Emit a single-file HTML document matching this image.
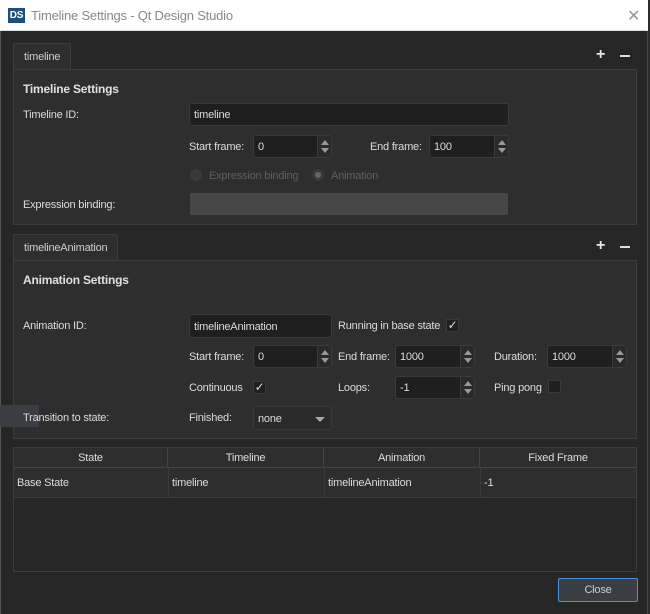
<!DOCTYPE html>
<html><head><meta charset="utf-8"><style>
*{box-sizing:border-box;margin:0;padding:0}
body{width:650px;height:614px;background:#2b2b2b;font-family:"Liberation Sans",sans-serif;font-size:11px;letter-spacing:-0.2px;color:#dcdcdc;position:relative;overflow:hidden}
.a{position:absolute}
.win{left:0;top:0;width:648px;height:614px;background:#262626;border-left:1px solid #555;border-right:1px solid #444}
.title{left:0;top:0;width:648px;height:31px;background:#fff;border-bottom:1px solid #ddd}
.logo{left:8px;top:8px;width:17px;height:15px;background:#1e4f7a;color:#fff;font-weight:bold;font-size:10px;line-height:15px;text-align:center}
.ttl{left:31px;top:8px;font-size:13px;color:#888}
.tab{background:#2e2e2e;border:1px solid #3c3c3c;border-bottom:none;border-radius:2px 2px 0 0;color:#cfcfcf;padding:0 10px;line-height:26px}
.panel{background:#2e2e2e;border:1px solid #3c3c3c}
.h{font-weight:bold;font-size:12px;color:#e0e0e0}
.inp{background:#1f1f1f;border:1px solid #3a3a3a;border-radius:3px;color:#dcdcdc;padding-left:4px}
.sp{position:absolute;right:0;top:0;width:14px;height:100%;border-left:1px solid #3a3a3a;background:#2a2a2a}
.sp:before{content:"";position:absolute;left:3px;top:4px;border:4px solid transparent;border-bottom:5px solid #999;border-top:0}
.sp:after{content:"";position:absolute;left:3px;bottom:4px;border:4px solid transparent;border-top:5px solid #999;border-bottom:0}
.cb{width:13px;height:13px;background:#1f1f1f;border:1px solid #3a3a3a;color:#ddd;font-size:12px;line-height:11px;text-align:center}
.pm{color:#e6e6e6;font-size:16px;font-weight:bold}
.th{background:#2e2e2e;border-right:1px solid #444;border-bottom:1px solid #444;text-align:center;line-height:21px;color:#ddd}
</style></head><body>
<div class="a win"></div>
<div class="a title"></div>
<div class="a logo">DS</div>
<div class="a ttl">Timeline Settings - Qt Design Studio</div>
<div class="a" style="left:627px;top:6px;font-size:16px;color:#999">✕</div>

<div class="a tab" style="left:13px;top:43px;height:27px">timeline</div>
<div class="a pm" style="left:596px;top:46px">+</div><div class="a" style="left:620px;top:55px;width:10px;height:2px;background:#ddd"></div>
<div class="a panel" style="left:13px;top:69px;width:624px;height:156px"></div>
<div class="a h" style="left:23px;top:82px">Timeline Settings</div>
<div class="a" style="left:23px;top:109px">Timeline ID:</div>
<div class="a inp" style="left:189px;top:103px;width:320px;height:23px;line-height:23px">timeline</div>
<div class="a" style="left:189px;top:141px">Start frame:</div>
<div class="a inp" style="left:253px;top:135px;width:79px;height:23px;line-height:23px">0<span class="sp"></span></div>
<div class="a" style="left:370px;top:141px">End frame:</div>
<div class="a inp" style="left:429px;top:135px;width:80px;height:23px;line-height:23px">100<span class="sp"></span></div>
<div class="a" style="left:190px;top:169px;width:12px;height:12px;border-radius:50%;background:#3a3a3a"></div>
<div class="a" style="left:209px;top:170px;color:#5f5f5f">Expression binding</div>
<div class="a" style="left:312px;top:169px;width:12px;height:12px;border-radius:50%;background:#3a3a3a"><div class="a" style="left:3px;top:3px;width:6px;height:6px;border-radius:50%;background:#666"></div></div>
<div class="a" style="left:331px;top:170px;color:#5f5f5f">Animation</div>
<div class="a" style="left:23px;top:199px">Expression binding:</div>
<div class="a" style="left:190px;top:193px;width:318px;height:22px;background:#474747;border-radius:2px"></div>

<div class="a tab" style="left:13px;top:234px;height:27px">timelineAnimation</div>
<div class="a pm" style="left:596px;top:237px">+</div><div class="a" style="left:620px;top:246px;width:10px;height:2px;background:#ddd"></div>
<div class="a panel" style="left:13px;top:260px;width:624px;height:179px"></div>
<div class="a h" style="left:23px;top:273px">Animation Settings</div>
<div class="a" style="left:23px;top:320px">Animation ID:</div>
<div class="a inp" style="left:189px;top:314px;width:143px;height:24px;line-height:24px">timelineAnimation</div>
<div class="a" style="left:338px;top:320px">Running in base state</div>
<div class="a cb" style="left:446px;top:319px">✓</div>
<div class="a" style="left:189px;top:351px">Start frame:</div>
<div class="a inp" style="left:253px;top:345px;width:79px;height:23px;line-height:23px">0<span class="sp"></span></div>
<div class="a" style="left:338px;top:351px">End frame:</div>
<div class="a inp" style="left:395px;top:345px;width:80px;height:23px;line-height:23px">1000<span class="sp"></span></div>
<div class="a" style="left:494px;top:351px">Duration:</div>
<div class="a inp" style="left:547px;top:345px;width:80px;height:23px;line-height:23px">1000<span class="sp"></span></div>
<div class="a" style="left:189px;top:382px">Continuous</div>
<div class="a cb" style="left:253px;top:381px">✓</div>
<div class="a" style="left:338px;top:382px">Loops:</div>
<div class="a inp" style="left:395px;top:376px;width:80px;height:23px;line-height:23px">-1<span class="sp"></span></div>
<div class="a" style="left:494px;top:382px">Ping pong</div>
<div class="a cb" style="left:548px;top:380px"></div>
<div class="a" style="left:0;top:405px;width:39px;height:22px;background:#3a3d42"></div>
<div class="a" style="left:23px;top:412px">Transition to state:</div>
<div class="a" style="left:189px;top:412px">Finished:</div>
<div class="a inp" style="left:253px;top:406px;width:79px;height:24px;line-height:24px;background:#2a2a2a">none<span class="a" style="right:6px;top:10px;border:5px solid transparent;border-top:5px solid #aaa;border-bottom:0"></span></div>

<div class="a" style="left:13px;top:447px;width:624px;height:125px;background:#262626;border:1px solid #3c3c3c"></div>
<div class="a th" style="left:14px;top:448px;width:154px;height:20px">State</div>
<div class="a th" style="left:168px;top:448px;width:156px;height:20px">Timeline</div>
<div class="a th" style="left:324px;top:448px;width:156px;height:20px">Animation</div>
<div class="a th" style="left:480px;top:448px;width:156px;height:20px;border-right:none">Fixed Frame</div>
<div class="a" style="left:14px;top:468px;width:622px;height:30px;background:#2e2e2e;border-bottom:1px solid #3a3a3a"></div>
<div class="a" style="left:168px;top:468px;width:1px;height:30px;background:#3a3a3a"></div>
<div class="a" style="left:324px;top:468px;width:1px;height:30px;background:#3a3a3a"></div>
<div class="a" style="left:480px;top:468px;width:1px;height:30px;background:#3a3a3a"></div>
<div class="a" style="left:17px;top:477px">Base State</div>
<div class="a" style="left:172px;top:477px">timeline</div>
<div class="a" style="left:328px;top:477px">timelineAnimation</div>
<div class="a" style="left:484px;top:477px">-1</div>

<div class="a" style="left:558px;top:578px;width:80px;height:24px;background:#3b3e43;border:1px solid #4a90d9;border-radius:2px;text-align:center;line-height:22px;color:#ccc">Close</div>
</body></html>
